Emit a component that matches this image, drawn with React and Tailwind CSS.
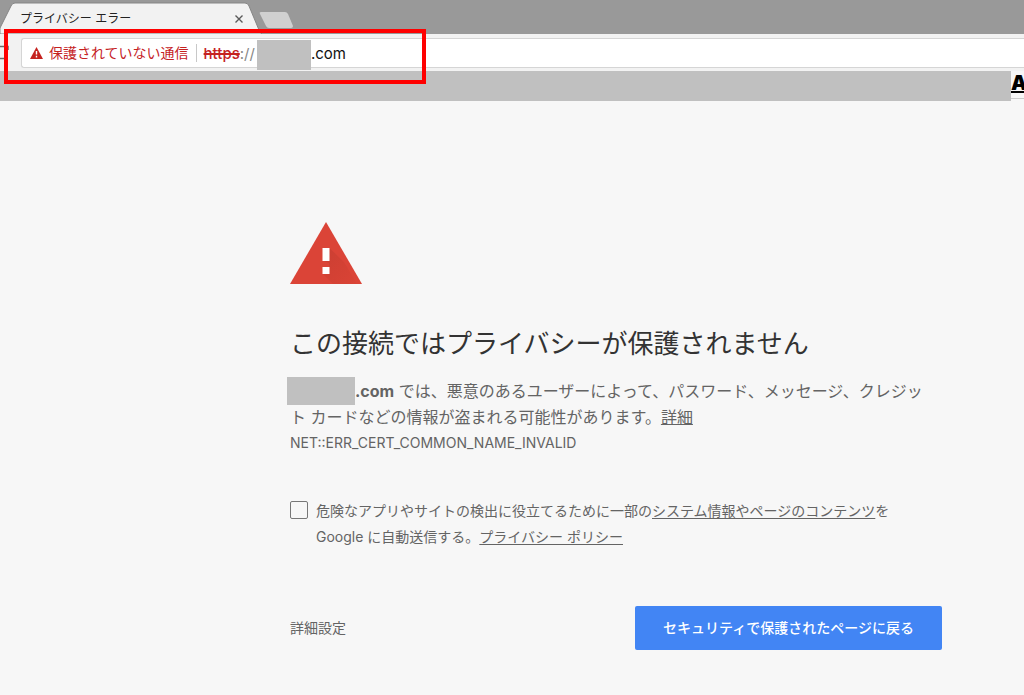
import React, { useState } from 'react'

const WarningIcon = () => (
  <svg className="block w-[72px] h-[62px]" viewBox="0 0 72 62" aria-hidden="true">
    <defs>
      <linearGradient id="shade" x1="0" y1="0" x2="1" y2="1">
        <stop offset="0" stopColor="#b93a2f" stopOpacity="0.5" />
        <stop offset="1" stopColor="#c53929" stopOpacity="0.08" />
      </linearGradient>
    </defs>
    <path d="M36 0L72 62H0Z" fill="#db4437" />
    <path d="M39.500 26L54 40L67 62H43L33 52L39 47V41L33 39Z" fill="url(#shade)" />
    <rect x="32.500" y="26" width="7" height="13" fill="#fff" />
    <rect x="32.500" y="45" width="7" height="7" fill="#fff" />
  </svg>
)

const TabStrip = () => (
  <div className="flex h-[34px] bg-[#999999] overflow-hidden">
    <div className="relative w-[262px] h-full shrink-0">
      <svg className="absolute inset-0" width="262" height="34" viewBox="0 0 262 34" aria-hidden="true">
        <path
          d="M0 34V28L11 6Q12 3 15 3H245Q248 3 249 6L259 30Q260 33 262 34Z"
          fill="#f2f2f2"
          stroke="#858585"
          strokeWidth="1"
        />
      </svg>
      <div className="relative flex items-center justify-between h-full pt-1 pl-5 pr-[17px]">
        <span className="text-xs text-[#222222]">プライバシー エラー</span>
        <button type="button" aria-label="タブを閉じる" className="w-3 h-3 flex items-center justify-center">
          <svg width="8" height="8" viewBox="0 0 8 8" aria-hidden="true">
            <path d="M0.5 0.5L7.5 7.5M7.5 0.5L0.5 7.5" stroke="#5a5a5a" strokeWidth="1.4" />
          </svg>
        </button>
      </div>
    </div>
    <button type="button" aria-label="新しいタブ" className="self-start mt-3 -ml-1">
      <svg width="36" height="16" viewBox="0 0 36 16" aria-hidden="true">
        <path d="M3 0H27Q29 0 30 2L35 14Q35 16 33 16H11Q9 16 8 14L2 2Q1 0 3 0Z" fill="#d0d0d0" />
      </svg>
    </button>
  </div>
)

const Toolbar = () => (
  <div className="flex items-center h-[37px] bg-[#f2f2f2]">
    <svg className="w-[21px] h-8 shrink-0" viewBox="0 0 21 32" aria-hidden="true">
      <path d="M0 9.500H8V13M0 21.500H4" fill="none" stroke="#6b6b6b" strokeWidth="1.500" />
    </svg>
    <div className="flex flex-1 items-center h-[30px] bg-white border border-r-0 border-[#d5d5d5] rounded-l-[3px]">
      <svg className="ml-2 w-[13px] h-3 shrink-0" viewBox="0 0 13 12" aria-hidden="true">
        <path d="M6.500 0L13 12H0Z" fill="#c5221f" />
        <path d="M6.500 4V7.500M6.500 8.800V10.400" stroke="#fff" strokeWidth="1.400" />
      </svg>
      <span className="ml-[6px] pt-px text-sm text-[#c5221f] whitespace-nowrap">保護されていない通信</span>
      <span className="mx-[7px] w-px h-[18px] bg-[#c8c8c8]" />
      <span className="pt-1 text-[15px] text-[#888888] whitespace-nowrap">
        <span className="font-medium text-[#c5221f] line-through decoration-2">https</span>://
      </span>
      <span className="self-start mt-px ml-[2px] w-[54px] h-[30px] bg-[#c0c0c0]" />
      <span className="pt-1 text-[15px] text-[#111111]">.com</span>
    </div>
  </div>
)

const BookmarkBar = () => (
  <div className="flex h-[30px]">
    <div className="flex-1 bg-[#c0c0c0]" />
    <div className="w-[13px] h-[28px] overflow-hidden border-b border-[#cccccc]">
      <a href="#" className="text-[20px] leading-6 font-black text-black underline decoration-2">
        A
      </a>
    </div>
  </div>
)

const App = () => {
  const [report, setReport] = useState(false)

  return (
    <div className="min-h-screen bg-[#f7f7f7] text-[#646464] font-[Inter,'Noto_Sans_CJK_JP',sans-serif]">
      {/* Browser chrome */}
      <header className="relative">
        <TabStrip />
        <Toolbar />
        <BookmarkBar />
        {/* Highlight around the address */}
        <div className="absolute left-1 top-[29px] w-[422px] h-[55px] border-4 border-[#ff0000]" />
      </header>

      {/* Interstitial */}
      <main className="ml-[290px] max-w-[652px] pt-[121px]">
        <WarningIcon />
        <h1 className="mt-10 text-[26px] leading-10 text-[#333333]">この接続ではプライバシーが保護されません</h1>
        <p className="mt-[14px] pr-2 text-base leading-[26px]">
          <span className="inline-block align-middle -ml-[3px] w-[68px] h-[28px] -mt-[6px] -mb-[2px] bg-[#c0c0c0]" />
          <strong className="font-bold">.com</strong> では、悪意のあるユーザーによって、パスワード、メッセージ、クレジット カードなどの情報が盗まれる可能性があります。
          <a href="#" className="underline">詳細</a>
        </p>
        <p className="text-sm leading-[26px]">NET::ERR_CERT_COMMON_NAME_INVALID</p>

        <div className="flex items-start mt-[42px] text-sm leading-[26px]">
          <input
            id="report"
            type="checkbox"
            checked={report}
            onChange={(e) => setReport(e.target.checked)}
            className="appearance-none shrink-0 mt-[3px] w-[18px] h-[18px] border border-[#777777] rounded-[2px] checked:bg-[#4285f4]"
          />
          <label htmlFor="report" className="ml-2">
            危険なアプリやサイトの検出に役立てるために一部の
            <a href="#" className="underline underline-offset-2">システム情報やページのコンテンツ</a>を<br />
            Google に自動送信する。
            <a href="#" className="underline underline-offset-2">プライバシー ポリシー</a>
          </label>
        </div>

        <div className="flex items-center justify-between mt-14">
          <button type="button" className="text-sm">詳細設定</button>
          <button type="button" className="px-7 h-[44px] rounded-[2px] bg-[#4285f4] text-sm font-medium text-white">
            セキュリティで保護されたページに戻る
          </button>
        </div>
      </main>
    </div>
  )
}

export default App
